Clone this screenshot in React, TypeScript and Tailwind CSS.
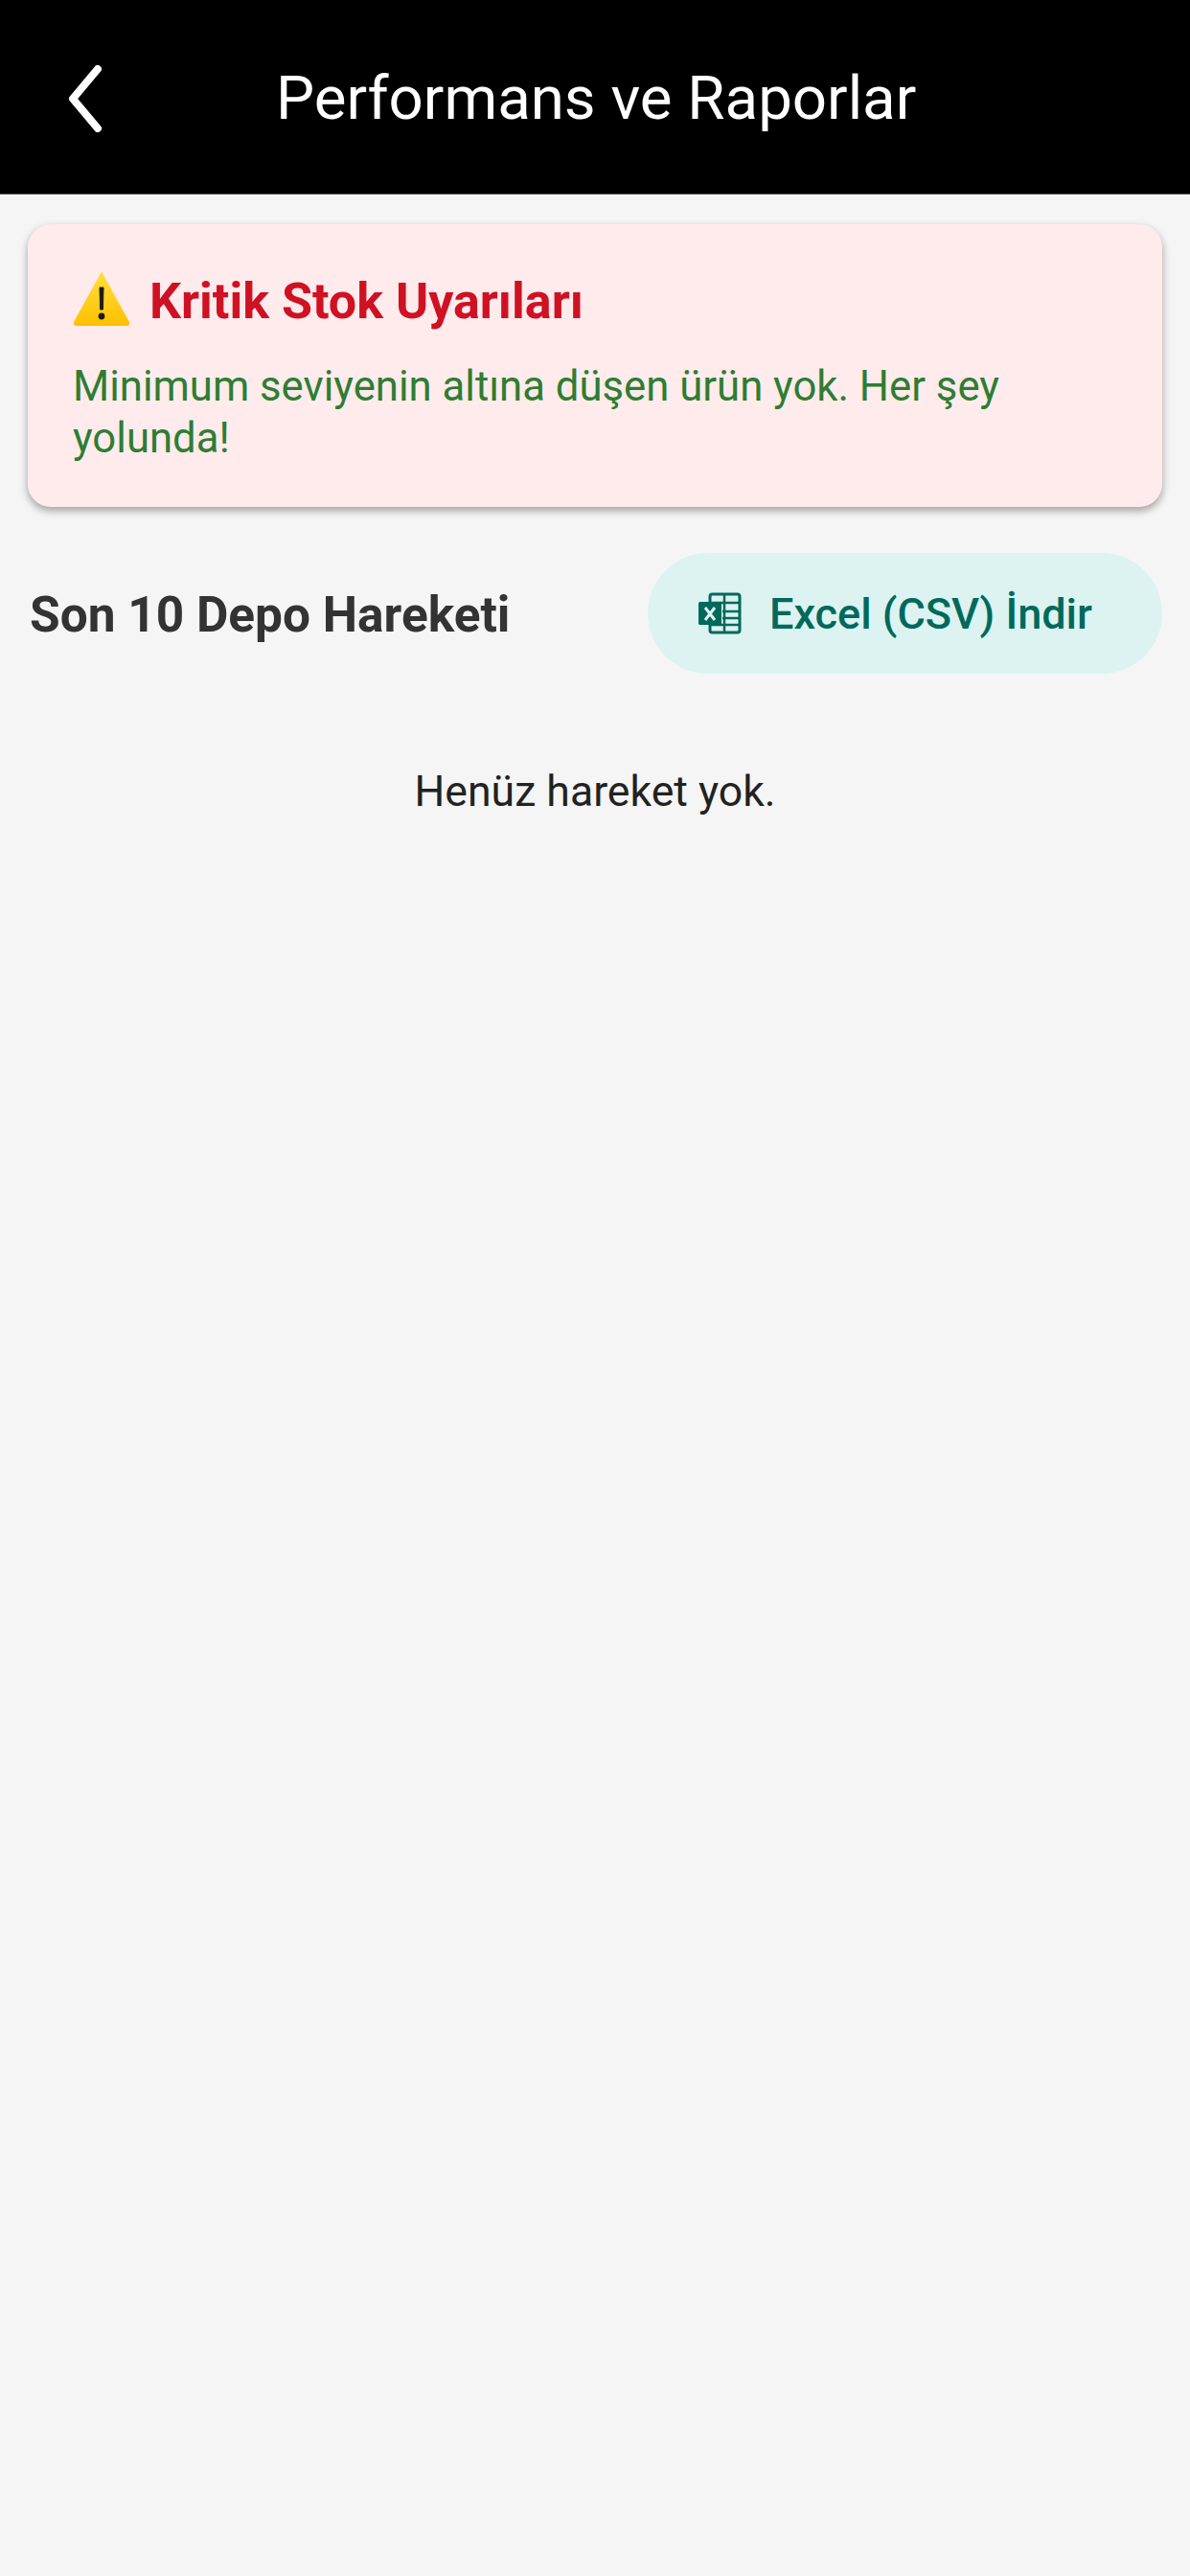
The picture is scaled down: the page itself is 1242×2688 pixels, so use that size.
const font = "font-['Roboto',sans-serif]";

const BackIcon = () => (
  <svg width="40" height="70" viewBox="0 0 40 70" fill="none" className="block">
    <path d="M33 4 L7 35 L33 66" stroke="#fff" strokeWidth="8" strokeLinecap="round" strokeLinejoin="round" />
  </svg>
);

const WarningIcon = () => (
  <svg width="60" height="57" viewBox="0 0 60 57" className="block shrink-0">
    <defs>
      <linearGradient id="warn" x1="0" y1="0" x2="0" y2="1">
        <stop offset="0" stopColor="#ffdf3d" />
        <stop offset="1" stopColor="#fdc000" />
      </linearGradient>
    </defs>
    <path d="M30 0 Q31 0 32 3 L59 52 Q60 56 56 56 L4 56 Q0 56 1 52 L28 3 Q29 0 30 0 Z" fill="url(#warn)" />
    <path d="M28 16 L32 16 L31.4 39 L28.6 39 Z" fill="#1c1c1c" stroke="#1c1c1c" strokeWidth="1" strokeLinejoin="round" />
    <circle cx="30" cy="46" r="3.4" fill="#1c1c1c" />
  </svg>
);

const ExcelIcon = () => (
  <svg width="46" height="44" viewBox="0 0 46 44" fill="none" className="block shrink-0">
    <rect x="13" y="2" width="31" height="40" rx="2.5" stroke="#00695c" strokeWidth="3" />
    <path d="M13 11 H44 M26 20 H44 M26 27 H44 M13 34 H44 M28 2 V42" stroke="#00695c" strokeWidth="2.5" />
    <rect x="1" y="10" width="24" height="24" rx="1.5" fill="#00695c" />
    <path d="M8 16 L18 29 M18 16 L8 29" stroke="#e0f5f2" strokeWidth="3" />
  </svg>
);

export default function App() {
  return (
    <div className={`${font} w-[1242px] h-[2688px] bg-[#f5f5f5] flex flex-col`}>
      {/* HEADER */}
      <div className="h-[203px] bg-black border-b border-[#555] flex items-center shrink-0 pt-[3px]">
        <div className="ml-[69px] w-[219px] shrink-0">
          <BackIcon />
        </div>
        <h1 className="text-white text-[63.6px] leading-none font-normal whitespace-nowrap">
          Performans ve Raporlar
        </h1>
      </div>

      <div className="px-[29px] pt-[31px] flex flex-col">
        {/* ALERT CARD */}
        <div className="h-[295px] rounded-[24px] bg-[#ffebec] shadow-[0_4px_8px_rgba(0,0,0,0.35)] pl-[47px] pr-[40px] pt-[48px]">
          <div className="flex items-center gap-[20px] h-[60px]">
            <WarningIcon />
            <span className="mt-[6px] text-[#cf1124] text-[52px] leading-none font-bold whitespace-nowrap">
              Kritik Stok Uyarıları
            </span>
          </div>
          <p className="mt-[34px] text-[#2e7d32] text-[43.7px] leading-[54px]">
            Minimum seviyenin altına düşen ürün yok. Her şey yolunda!
          </p>
        </div>

        {/* SON HAREKETLER */}
        <div className="mt-[48px] flex items-center justify-between pl-[2px]">
          <span className="mt-[4px] text-[#333] text-[51.4px] leading-none font-bold whitespace-nowrap">
            Son 10 Depo Hareketi
          </span>
          <div className="h-[126px] w-[537px] rounded-full bg-[#dcf3f1] flex items-center pl-[52px] gap-[29px]">
            <ExcelIcon />
            <span className="text-[#00695c] text-[45px] leading-none font-medium whitespace-nowrap">
              Excel (CSV) İndir
            </span>
          </div>
        </div>

        <p className="mt-[98px] text-center text-[#222] text-[44.6px] leading-[50px]">Henüz hareket yok.</p>
      </div>
    </div>
  );
}
